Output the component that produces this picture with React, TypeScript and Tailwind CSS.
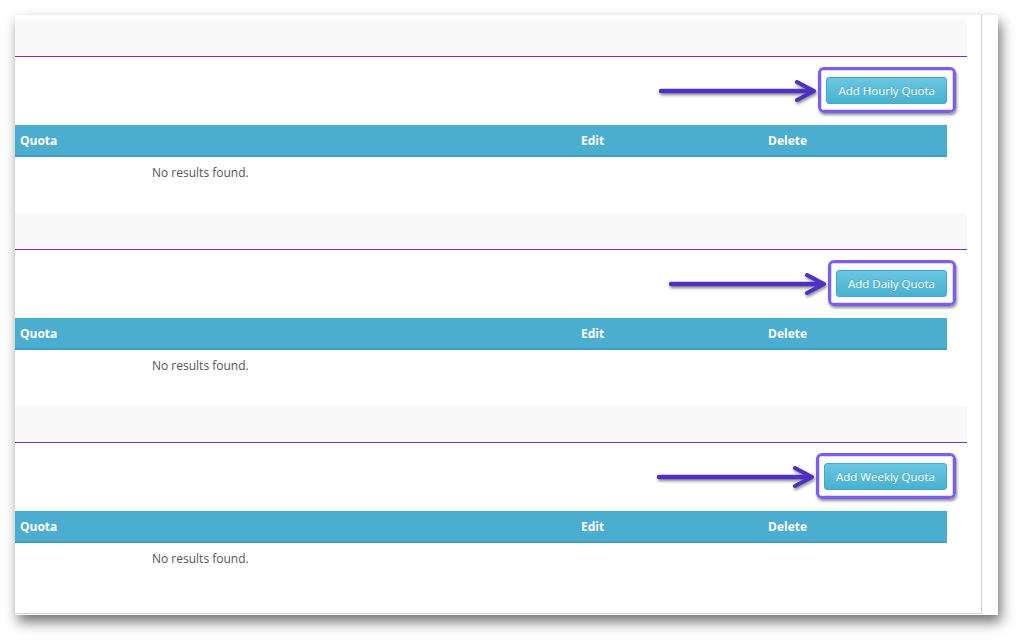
import React from "react";

const font = { fontFamily: '"Open Sans", "Noto Sans", Arial, sans-serif' };

function Arrow() {
  return (
    <svg width="160" height="28" viewBox="0 0 160 28" className="drop-shadow-[1px_2px_1.5px_rgba(0,0,0,0.45)]">
      <line x1="3" y1="14" x2="152" y2="14" stroke="#4f2fc4" strokeWidth="4.5" strokeLinecap="round" />
      <polyline points="139,5 156,14 139,23" fill="none" stroke="#4f2fc4" strokeWidth="4" strokeLinecap="round" strokeLinejoin="round" />
    </svg>
  );
}

function Section({ label }: { label: string }) {
  return (
    <div className="flex flex-col">
      <div className="h-[36px] bg-[#f9f9f9]" />
      <div className="h-[1px] bg-[#7438a6]" />
      <div className="h-[68px] flex items-start justify-end pr-[20px] pt-[20px]">
        <div className="relative">
          <div className="absolute -left-[8px] -right-[9px] -top-[10px] -bottom-[9px] rounded-[6px] border-[3px] border-[#7c5cf6] shadow-[1px_2px_3px_rgba(0,0,0,0.45)]">
            <div className="absolute inset-0 rounded-[3px] border border-[#dcdcdc]" />
          </div>
          <div className="absolute right-full mr-[8px] top-1/2 -translate-y-1/2">
            <Arrow />
          </div>
          <button
            className="relative h-[27px] px-[11px] rounded-[3px] border border-[#42a9c9] bg-gradient-to-b from-[#6ac7e2] to-[#47b1d1] text-white text-[11.5px] leading-none [text-shadow:0_-1px_0_rgba(0,0,0,0.15)]"
            style={font}
          >
            {label}
          </button>
        </div>
      </div>
      <div className="mr-[20px] h-[32px] pt-[2px] bg-[#4baed0] border-b-2 border-[#3e9fc3] flex items-center text-white font-bold text-[12px]" style={font}>
        <div className="w-[561px] pl-[5px]">Quota</div>
        <div className="w-[187px] pl-[5px]">Edit</div>
        <div className="flex-1 pl-[5px]">Delete</div>
      </div>
      <div className="h-[56px] pl-[137px] pt-[7px] text-[12px] text-[#555555]" style={font}>
        No results found.
      </div>
    </div>
  );
}

export default function App() {
  return (
    <div className="w-[1023px] h-[640px] bg-white pl-[15px] pt-[15px] overflow-hidden">
      <div className="w-[983px] h-[600px] bg-white shadow-[3px_7px_12px_rgba(0,0,0,0.55)]">
        <div className="w-[967px] h-[599px] border-r border-b border-[#d2d2d2] overflow-hidden">
          <div className="w-[952px] pt-[5px]">
            <Section label="Add Hourly Quota" />
            <Section label="Add Daily Quota" />
            <Section label="Add Weekly Quota" />
          </div>
        </div>
      </div>
    </div>
  );
}
